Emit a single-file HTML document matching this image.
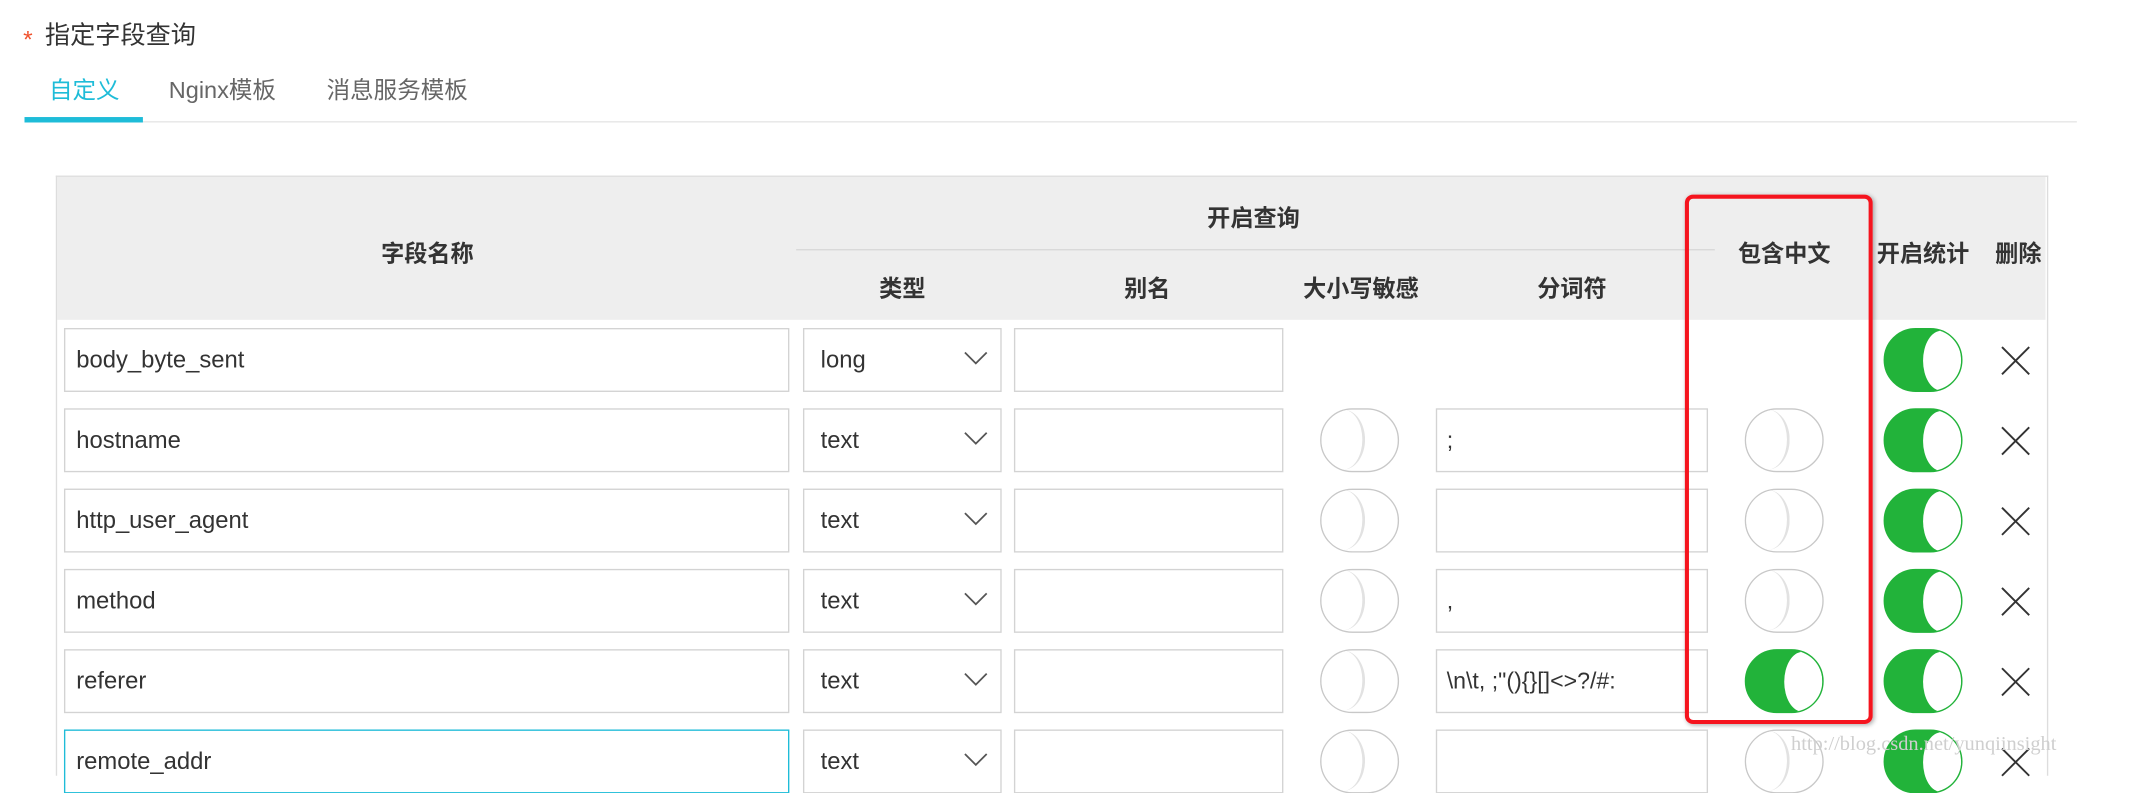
<!DOCTYPE html>
<html><head><meta charset="utf-8"><style>
html,body{margin:0;padding:0;background:#fff;overflow:hidden;width:2134px;height:762px}
#w{position:absolute;left:0;top:0;width:1568px;height:560px;transform:scale(1.36097);transform-origin:0 0;font-family:"Liberation Sans","Noto Sans CJK SC",sans-serif;color:#333}
.a{position:absolute}
.inp{position:absolute;border:1px solid #d3d3d3;background:#fff;box-sizing:border-box;height:47px;font-size:17.5px;line-height:45px;padding-left:8px;color:#333}
.th{position:absolute;font-weight:bold;font-size:17px;color:#333;transform:translateX(-50%);white-space:nowrap}
.tg{position:absolute;width:58px;height:47px;border-radius:24px;box-sizing:border-box;border:1.5px solid #c8c8c8;background:#fff;overflow:hidden}
.tg .k{position:absolute;top:0;left:0;width:30px;height:44px;border-radius:50%;border-right:2px solid #e2e2e2;background:#fff}
.tg.on{background:#22b33a;border-color:#22b33a}
.tg.on .k{left:auto;right:0;border:1.5px solid #22b33a;border-right:none;width:28px}
.x{position:absolute;width:22px;height:22px}
</style></head><body><div id="w">
<div class="a" style="left:17px;top:19px;color:#f0522e;font-size:18px">*</div>
<div class="a" style="left:33px;top:12px;font-size:18.5px;color:#333">指定字段查询</div>
<div class="a" style="left:36px;top:52px;font-size:17.3px;color:#1ebcd8">自定义</div>
<div class="a" style="left:124px;top:52px;font-size:17.3px;color:#666">Nginx模板</div>
<div class="a" style="left:240px;top:52px;font-size:17.3px;color:#666">消息服务模板</div>
<div class="a" style="left:18px;top:89px;width:1508px;height:1px;background:#e6e6e6"></div>
<div class="a" style="left:18px;top:86px;width:87px;height:4px;background:#1ebcd8"></div>

<div class="a" style="left:41px;top:129px;width:1462px;height:440px;border:1px solid #ddd;border-bottom:none"></div>
<div class="a" style="left:42px;top:130px;width:1461px;height:105px;background:#eeeeee"></div>
<div class="a" style="left:585px;top:183px;width:675px;height:1px;background:#d8d8d8"></div>
<div class="th" style="left:314px;top:172px">字段名称</div>
<div class="th" style="left:921px;top:146px">开启查询</div>
<div class="th" style="left:663px;top:198px">类型</div>
<div class="th" style="left:843px;top:198px">别名</div>
<div class="th" style="left:1000px;top:198px">大小写敏感</div>
<div class="th" style="left:1155px;top:198px">分词符</div>
<div class="th" style="left:1311px;top:172px">包含中文</div>
<div class="th" style="left:1413px;top:172px">开启统计</div>
<div class="th" style="left:1483px;top:172px">删除</div>

<div id="rows"></div>

<div class="a" style="left:1238px;top:143px;width:138px;height:389px;border:3px solid #f5141e;border-radius:6px;box-sizing:border-box;box-shadow:1px 1px 3px rgba(0,0,0,.3)"></div>
<div class="a" style="left:1316px;top:539px;font-family:'Liberation Serif',serif;font-size:15px;color:#cfcfcf">http://blog.csdn.net/yunqiinsight</div>
</div>
<script>
var rows=[["body_byte_sent","long",null,null,null],["hostname","text",";",0,0],["http_user_agent","text","",0,0],["method","text",",",0,0],["referer","text","\\n\\t, ;\"(){}[]<>?/#:",0,1],["remote_addr","text","",0,0]];
var h="";
rows.forEach(function(r,i){var y=241+i*59;
h+='<div class="inp" style="left:47px;top:'+y+'px;width:533px;'+(i==5?'border-color:#1ebcd8;':'')+'">'+r[0]+'</div>';
h+='<div class="inp" style="left:590px;top:'+y+'px;width:146px;padding-left:12px">'+r[1]+'<svg style="position:absolute;left:117px;top:15px" width="18" height="12" viewBox="0 0 18 12"><path d="M1 2 L9 10 L17 2" fill="none" stroke="#555" stroke-width="1.3"/></svg></div>';
h+='<div class="inp" style="left:745px;top:'+y+'px;width:198px"></div>';
if(r[2]!==null){
h+='<div class="tg" style="left:970px;top:'+y+'px"><div class="k"></div></div>';
h+='<div class="inp" style="left:1055px;top:'+y+'px;width:200px"></div>';
h+='<div class="a" style="left:1063px;top:'+(y+14)+'px;font-size:17px;white-space:pre">'+r[2].replace(/</g,"&lt;").replace(/>/g,"&gt;")+'</div>';
h+='<div class="tg'+(r[4]?' on':'')+'" style="left:1282px;top:'+y+'px"><div class="k"></div></div>';}
h+='<div class="tg on" style="left:1384px;top:'+y+'px"><div class="k"></div></div>';
h+='<svg class="x" style="left:1470px;top:'+(y+13)+'px" viewBox="0 0 22 22"><path d="M1 1L21 21M21 1L1 21" stroke="#333" stroke-width="1.4"/></svg>';
});
document.getElementById("rows").innerHTML=h;
</script>
</body></html>
